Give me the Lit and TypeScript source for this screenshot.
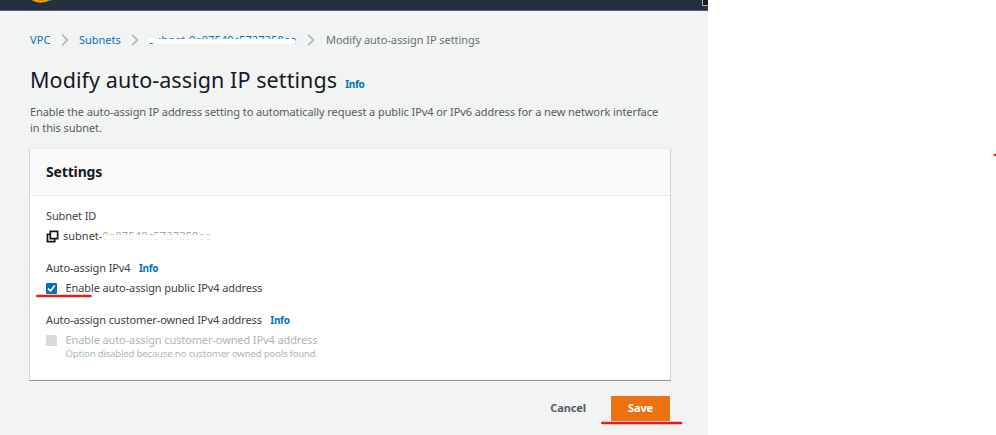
import { LitElement, html, css } from "lit";
import { customElement } from "lit/decorators.js";

const chevron = html`<svg class="chev" width="8" height="14" viewBox="0 0 8 14">
  <path d="M1 1.5 L6.3 7 L1 12.5" fill="none" stroke="#aab7b8" stroke-width="1.8" />
</svg>`;

@customElement("app-root")
export class AppRoot extends LitElement {
  static styles = css`
    :host {
      display: block;
      position: relative;
      width: 996px;
      height: 435px;
      overflow: hidden;
      background: #fff;
      font-family: "Noto Sans", "Open Sans", sans-serif;
      font-size: 11px;
      line-height: 16px;
      color: #16191f;
    }
    * { box-sizing: border-box; }
    .page { width: 708px; height: 435px; background: #f2f3f3; white-space: nowrap; }
    .topbar {
      height: 11px;
      background: #232f3e;
      border-bottom: 1px solid #555866;
      display: flex;
      justify-content: space-between;
      overflow: hidden;
    }
    .topbar svg { display: block; }
    .smile { margin-left: 28px; }
    .content { width: 642px; margin-left: 29px; }
    .crumbs { display: flex; align-items: center; height: 16px; margin: 21px 0 0 1px; color: #687078; }
    .link { color: #0073bb; }
    .chev { display: block; }
    .vpc { width: 31px; letter-spacing: 0.1px; }
    .subnets { margin-left: 10px; width: 52px; letter-spacing: -0.02px; }
    .masked { position: relative; margin-left: 9px; padding-left: 1px; width: 159px; letter-spacing: 0.1px; }
    .current { margin-left: 11px; letter-spacing: -0.07px; }
    .heading { display: flex; align-items: baseline; margin: 16px 0 0 1px; height: 33px; }
    h1 { margin: 0; font-size: 21.5px; line-height: 32px; font-weight: 400; letter-spacing: 0.08px; }
    .info { color: #0073bb; font-size: 10px; font-weight: 700; margin-left: 8px; letter-spacing: -0.3px; }
    .row .info { margin-left: 8.5px; }
    .desc { margin: 7px 0 0 1px; color: #545b64; letter-spacing: -0.082px; }
    .panel {
      margin-top: 12px;
      height: 233px;
      background: #fff;
      border: 1px solid #d0d5d5;
      border-top-color: #eaeded;
      border-bottom-color: #879596;
    }
    .panel-head {
      height: 47px;
      padding: 15px 16px 0;
      background: #fafafa;
      border-bottom: 1px solid #eaeded;
    }
    h2 { margin: 0; font-size: 14px; line-height: 16px; font-weight: 700; letter-spacing: -0.15px; }
    .body { padding: 12px 16px 0; color: #3b4149; letter-spacing: -0.11px; }
    .row { display: flex; align-items: center; height: 16px; }
    .value { margin-top: 4px; }
    .group + .group { margin-top: 16px; }
    .copy { display: block; margin-right: 4px; }
    .id { position: relative; letter-spacing: 0; }
    .tail { color: #a3a7ab; letter-spacing: 0.2px; }
    .strike { position: absolute; left: 0; top: 0; overflow: visible; }
    .check { display: block; width: 11px; height: 11px; margin-right: 8.5px; background: #0073bb; border-radius: 1px; }
    .check.off { background: #d5dbdb; }
    .disabled { color: #aab7b8; }
    .hint { margin: -1px 0 0 19.5px; color: #aab7b8; font-size: 9.6px; line-height: 13px; letter-spacing: -0.19px; }
    .actions { display: flex; justify-content: flex-end; align-items: center; margin-top: 15px; padding-right: 1px; }
    button { font: inherit; font-weight: 700; border: 0; padding: 0 0 2px; height: 25px; letter-spacing: -0.1px; }
    .cancel { background: none; color: #545b64; margin-right: 25px; }
    .save { width: 59px; background: #ec7211; color: #fff; border-radius: 1px; }
    .marks { position: absolute; left: 0; top: 0; pointer-events: none; }
  `;

  private info() {
    return html`<span class="info">Info</span>`;
  }

  render() {
    return html`
      <div class="page">
        <div class="topbar">
          <svg class="smile" width="32" height="10" viewBox="0 0 32 10">
            <path d="M4 -1 Q12.5 4 22 -1" fill="none" stroke="#ff9900" stroke-width="2.4" />
            <path d="M23.5 -1 L23 1" stroke="#a87423" stroke-width="1" />
          </svg>
          <svg width="6" height="10" viewBox="0 0 6 10">
            <path d="M0.5 -2 V5.5 H7 V-2 Z" fill="#16191f" stroke="#aab7b8" stroke-width="1" />
          </svg>
        </div>
        <div class="content">
          <nav class="crumbs">
            <span class="link vpc">VPC</span>${chevron}
            <span class="link subnets">Subnets</span>${chevron}
            <span class="link masked">subnet-0a87549c5727358ee
              <svg class="strike" width="150" height="16">
                <path d="M2 8 L12 9.6 L42 9.4 L70 9.6 L100 9.4 L145 9.8" fill="none" stroke="#fff" stroke-width="5.4" stroke-linecap="round" />
              </svg>
            </span>${chevron}
            <span class="current">Modify auto-assign IP settings</span>
          </nav>
          <div class="heading"><h1>Modify auto-assign IP settings</h1>${this.info()}</div>
          <div class="desc">
            Enable the auto-assign IP address setting to automatically request a public IPv4 or IPv6 address for a new network interface<br />in this subnet.
          </div>
          <section class="panel">
            <div class="panel-head"><h2>Settings</h2></div>
            <div class="body">
              <div class="group">
                <div class="row">Subnet ID</div>
                <div class="row value">
                  <svg class="copy" width="13" height="13" viewBox="0 0 13 13" fill="none" stroke="#16191f" stroke-width="1.7">
                    <path d="M4.3 1.4 H11.6 V8.7 H4.3 Z" />
                    <path d="M4 4.3 H1.4 V11.6 H8.7 V9" />
                  </svg>
                  <span class="id">subnet-<span class="tail">0a87549c5727358ee</span>
                    <svg class="strike" width="150" height="16">
                      <path d="M39 9.3 H149" fill="none" stroke="#fff" stroke-width="5" />
                    </svg>
                  </span>
                </div>
              </div>
              <div class="group">
                <div class="row">Auto-assign IPv4${this.info()}</div>
                <div class="row value">
                  <svg class="check" width="11" height="11" viewBox="0 0 11 11">
                    <path d="M2 5.7 L4.5 8 L8.7 2.6" fill="none" stroke="#fff" stroke-width="1.6" />
                  </svg>
                  Enable auto-assign public IPv4 address
                </div>
              </div>
              <div class="group">
                <div class="row">Auto-assign customer-owned IPv4 address${this.info()}</div>
                <div class="row value disabled"><span class="check off"></span>Enable auto-assign customer-owned IPv4 address</div>
                <div class="hint">Option disabled because no customer owned pools found.</div>
              </div>
            </div>
          </section>
          <div class="actions">
            <button class="cancel">Cancel</button>
            <button class="save">Save</button>
          </div>
        </div>
      </div>
      <svg class="marks" width="996" height="435" fill="none" stroke="#e51c1c" stroke-width="2.6" stroke-linecap="round">
        <path d="M37.3 296 H90.5" />
        <path d="M602.3 423 H681" />
        <path d="M995 155 H998" />
      </svg>
    `;
  }
}
